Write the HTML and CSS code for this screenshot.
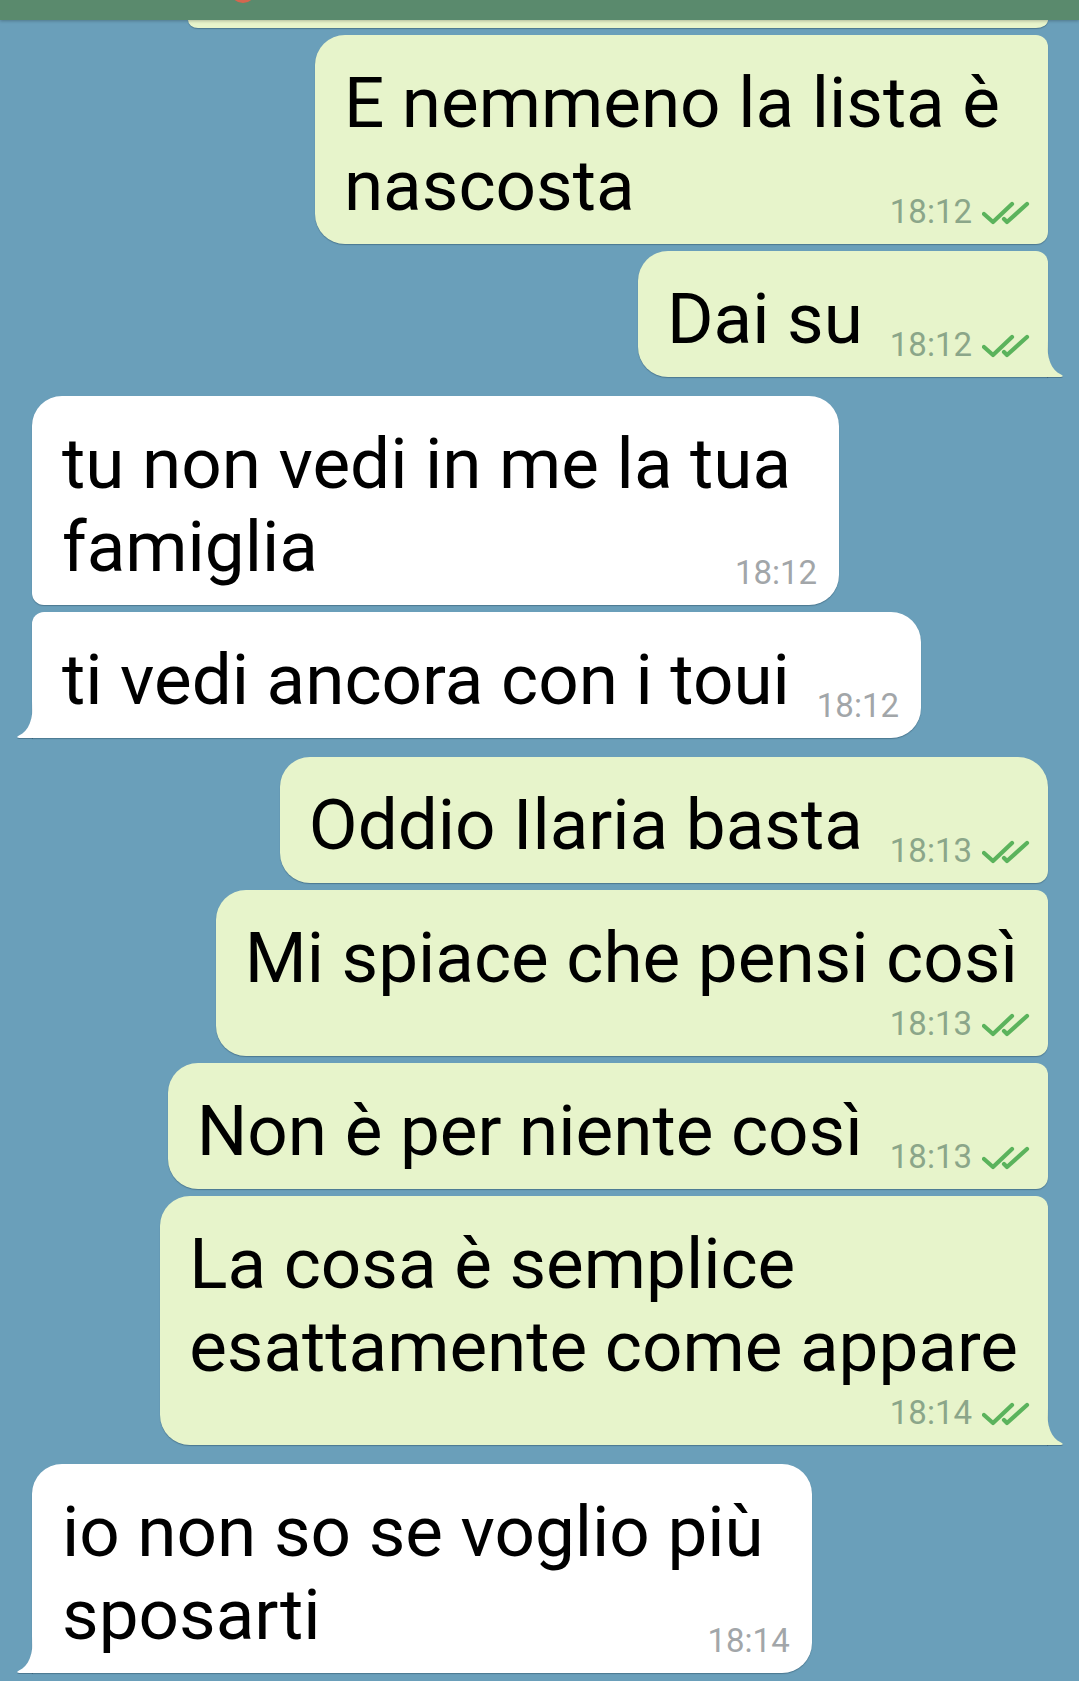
FILE: index.html
```html
<!DOCTYPE html>
<html>
<head>
    <title>Chat</title>
    <link rel="stylesheet" href="styles.css">
</head>
<body>
    <div class="topbar">
        <span class="avatar-dot"></span>
    </div>

    <div class="chat">
        <div class="bubble out cut"></div>

        <div class="bubble out mid wide">
            <div class="text">E nemmeno la lista è<br>nascosta<span class="meta">18:12<svg class="checks" viewBox="0 0 48 24"><polyline points="2,13 11,21 30,3"/><polyline points="22,18 25,21 45,3"/></svg></span></div>
        </div>

        <div class="bubble out last">
            <div class="text">Dai su<span class="meta">18:12<svg class="checks" viewBox="0 0 48 24"><polyline points="2,13 11,21 30,3"/><polyline points="22,18 25,21 45,3"/></svg></span></div>
            <svg class="tail" viewBox="0 0 16 38"><path d="M0 0 C0 20 4 31 14 35.5 C16.5 36.6 16 38 14 38 L0 38 Z"/></svg>
        </div>

        <div class="bubble in first wide group">
            <div class="text">tu non vedi in me la tua<br>famiglia<span class="meta">18:12</span></div>
        </div>

        <div class="bubble in last">
            <div class="text">ti vedi ancora con i toui<span class="meta">18:12</span></div>
            <svg class="tail" viewBox="0 0 16 38"><path d="M0 0 C0 20 4 31 14 35.5 C16.5 36.6 16 38 14 38 L0 38 Z"/></svg>
        </div>

        <div class="bubble out first group">
            <div class="text">Oddio Ilaria basta<span class="meta">18:13<svg class="checks" viewBox="0 0 48 24"><polyline points="2,13 11,21 30,3"/><polyline points="22,18 25,21 45,3"/></svg></span></div>
        </div>

        <div class="bubble out mid">
            <div class="text">Mi spiace che pensi così</div>
            <div class="meta below">18:13<svg class="checks" viewBox="0 0 48 24"><polyline points="2,13 11,21 30,3"/><polyline points="22,18 25,21 45,3"/></svg></div>
        </div>

        <div class="bubble out mid">
            <div class="text">Non è per niente così<span class="meta">18:13<svg class="checks" viewBox="0 0 48 24"><polyline points="2,13 11,21 30,3"/><polyline points="22,18 25,21 45,3"/></svg></span></div>
        </div>

        <div class="bubble out last">
            <div class="text">La cosa è semplice<br>esattamente come appare</div>
            <div class="meta below">18:14<svg class="checks" viewBox="0 0 48 24"><polyline points="2,13 11,21 30,3"/><polyline points="22,18 25,21 45,3"/></svg></div>
            <svg class="tail" viewBox="0 0 16 38"><path d="M0 0 C0 20 4 31 14 35.5 C16.5 36.6 16 38 14 38 L0 38 Z"/></svg>
        </div>

        <div class="bubble in single wide group">
            <div class="text">io non so se voglio più<br>sposarti<span class="meta">18:14</span></div>
            <svg class="tail" viewBox="0 0 16 38"><path d="M0 0 C0 20 4 31 14 35.5 C16.5 36.6 16 38 14 38 L0 38 Z"/></svg>
        </div>
    </div>
</body>
</html>
```

FILE: styles.css
```css
body {
    margin: 0;
    background-color: #6a9fba;
    font-family: 'Roboto', 'Liberation Sans', sans-serif;
    min-height: 100vh;
    overflow: hidden;
}

.topbar {
    position: relative;
    z-index: 2;
    height: 20px;
    padding-left: 230px;
    background-color: #5a8a6d;
    box-shadow: 0 1px 3px rgba(0, 0, 0, 0.25);
    overflow: hidden;
}

.avatar-dot {
    display: block;
    width: 26px;
    height: 26px;
    margin-top: -23px;
    border-radius: 50%;
    background-color: #d5664f;
}

.chat {
    display: flex;
    flex-direction: column;
    gap: 7px;
    padding: 0 31px 0 32px;
}

.bubble {
    position: relative;
    padding: 26px 30px 11px 29px;
    border-radius: 30px;
    box-shadow: 0 1px 1px rgba(20, 50, 70, 0.35);
    font-size: 71px;
    line-height: 83px;
    color: #000;
}

.bubble.group {
    margin-top: 12px;
}

.bubble.out {
    align-self: flex-end;
    background-color: #e7f4cb;
}

.bubble.in {
    align-self: flex-start;
    background-color: #ffffff;
    padding-left: 30px;
}

.bubble.wide {
    padding-right: 48px;
}

.bubble.cut {
    width: 860px;
    height: 8px;
    padding: 0;
    border-radius: 0 0 12px 10px / 0 0 8px 8px;
}

/* grouped corners */
.bubble.out.first { border-bottom-right-radius: 12px; }
.bubble.out.mid { border-top-right-radius: 12px; border-bottom-right-radius: 12px; }
.bubble.out.last { border-top-right-radius: 12px; border-bottom-right-radius: 0; }
.bubble.in.first { border-bottom-left-radius: 12px; }
.bubble.in.last { border-top-left-radius: 12px; border-bottom-left-radius: 0; }
.bubble.in.single { border-bottom-left-radius: 0; }

.tail {
    position: absolute;
    bottom: 0;
    width: 16px;
    height: 38px;
    filter: drop-shadow(0 1px 0.5px rgba(20, 50, 70, 0.35));
}

.out .tail {
    right: -15px;
    fill: #e7f4cb;
}

.in .tail {
    left: -15px;
    fill: #ffffff;
    transform: scaleX(-1);
}

.meta {
    float: right;
    margin: 47px -12px 0 27px;
    font-size: 33px;
    line-height: 42px;
    color: #8ba689;
    white-space: nowrap;
}

.meta.below {
    float: none;
    margin: 3px -12px 0 0;
    line-height: 43px;
    text-align: right;
}

.wide .meta {
    margin-right: -30px;
}

.in .meta {
    margin-right: -8px;
    color: #a2a6a9;
}

.in.wide .meta {
    margin-right: -26px;
}

.checks {
    width: 48px;
    height: 24px;
    margin-left: 10px;
    vertical-align: -2px;
    fill: none;
    stroke: #5bb35c;
    stroke-width: 4.2;
    stroke-linecap: round;
    stroke-linejoin: round;
}
```
